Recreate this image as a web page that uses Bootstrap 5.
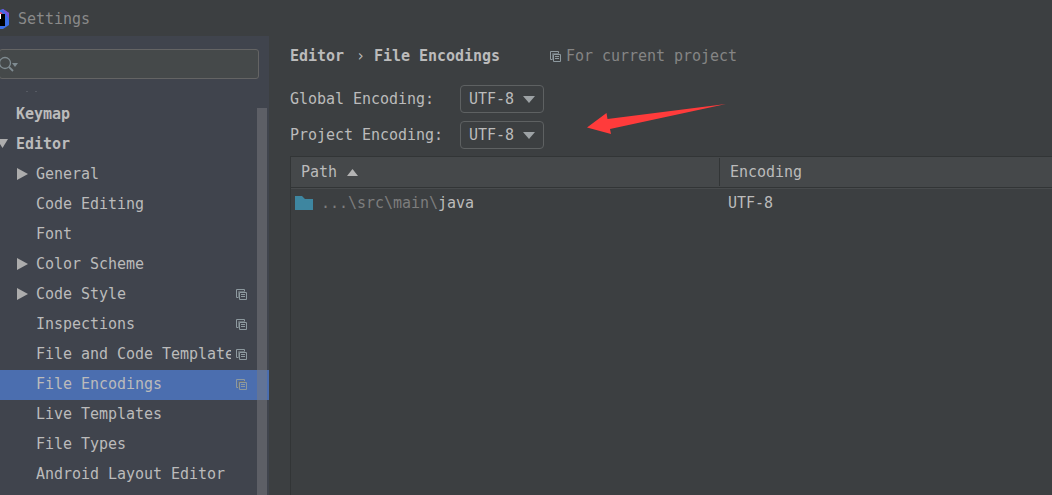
<!DOCTYPE html>
<html lang="en">
<head>
<meta charset="utf-8">
<title>Settings</title>
<link href="https://cdn.jsdelivr.net/npm/bootstrap@5.3.0/dist/css/bootstrap.min.css" rel="stylesheet">
<style>
body{background:#3c3f41;color:#bbb;font:15px/28px "DejaVu Sans Mono","Liberation Mono",monospace;letter-spacing:-.03px;height:495px;white-space:nowrap}
svg{display:block;flex:none}
.title-bar{height:36px;color:#8a8a8a}
.title-bar span{padding-top:1px}
.main-area{height:459px}
.side{width:269px;background:#40444d}
.search{width:260px;height:30px;margin:1px 0 0 -1px;border:1px solid #646464;border-radius:3px;background:#45494a}
.hint{height:21px}
.tree-row{height:30px;padding:0 22px 0 36px}
.tree-row.top-level{padding-left:16px}
.tree-row.sel{background:#4b6eaf}
.tree-row .label{width:195px;overflow:hidden;height:28px}
.tree-row .caret{position:absolute;left:17px;top:8px}
.tree-row .caret.open{left:-3px;top:9px}
.tree-row .scope{position:absolute;left:236px;top:9px}
.thumb{width:10px;height:387px;right:2px;top:72px;background:rgba(121,121,128,.5);z-index:2}
.content-pane{padding-left:21px}
.crumb{height:41px;padding-top:6px}
.crumb .sep{padding:0 13px 0 12px;width:30px;display:inline-block}
.form-line{height:28px;margin-bottom:8px}
.form-line .name{width:170px}
.combo{width:84px;height:28px;line-height:26px;border:1px solid #5e6162;border-radius:4px;padding:0 8px}
.grid-box{height:339px;margin-top:-1px;border:1px solid #323536;border-right:0;border-bottom:0}
.grid-head{height:31px;background:#45484a;border-bottom:1px solid #323536;line-height:31px}
.c1{width:429px}
.c2{padding-left:10px}
.grid-head .c1{border-right:1px solid #323536;height:28px;margin-top:1px;line-height:30px;padding-left:10px}
.grid-line{height:30px;line-height:28px;border-top:1px solid #484b4d}
.grid-line .c1{height:28px}
.dim{color:#7d7d7d}
.for-project{margin-left:2px;color:#858585}
.pointer{left:318px;top:67px}
</style>
</head>
<body class="overflow-hidden">
<svg width="0" height="0" class="position-absolute"><defs>
<symbol id="copy" viewBox="0 0 11 11"><path d="M2.500 8.500H.5V.5h8v2" fill="none" stroke="#8d999f"/><path d="M2.500 9V2.500H9" fill="none" stroke="#697278"/><path d="M3.500 3.500h7v7h-7zM5 5.500h4M5 7.500h4" fill="none" stroke="#8d999f"/></symbol>
<symbol id="right" viewBox="0 0 11 12"><path d="M0 0l11 6L0 12z" fill="#adadad"/></symbol>
</defs></svg>
<header class="title-bar d-flex align-items-center"><svg width="18" height="36"><path d="M0 10l3-1 6 4v12l-6 4H0z" fill="#3b6fe8"/><path d="M2 9l1 0 6 4v6l-3-5z" fill="#7950d8"/><path d="M0 12h1l2 2-3 0z" fill="#d34a79"/><path d="M0 14h5v12H0z" fill="#000"/><path d="M0 14h1v5H0z" fill="#fff"/></svg><span>Settings</span></header>
<div class="main-area d-flex">
<aside class="side position-relative flex-shrink-0 overflow-hidden">
<div class="pt-2"><div class="pt-1"><div class="search d-flex align-items-center"><svg width="19" height="20" fill="none" stroke="#7f8b91" stroke-width="1.300"><circle cx="5" cy="9" r="5.500"/><path d="M9 13l4 4" stroke-width="1.800"/><path d="M12 9h6l-3 4z" fill="#7f8b91" stroke="none"/></svg></div></div></div>
<div class="hint"><svg width="60" height="21"><path d="M26 12.500h2M35 12.500h2" stroke="#565a63"/></svg></div>
<nav>
<div class="tree-row top-level fw-bold">Keymap</div>
<div class="tree-row top-level fw-bold position-relative"><svg class="caret open" width="11" height="9"><path d="M0 0h11L5.500 9z" fill="#adadad"/></svg>Editor</div>
<div class="tree-row position-relative"><svg class="caret" width="11" height="12"><use href="#right"/></svg>General</div>
<div class="tree-row">Code Editing</div>
<div class="tree-row">Font</div>
<div class="tree-row position-relative"><svg class="caret" width="11" height="12"><use href="#right"/></svg>Color Scheme</div>
<div class="tree-row position-relative"><svg class="caret" width="11" height="12"><use href="#right"/></svg>Code Style<svg class="scope" width="11" height="11"><use href="#copy"/></svg></div>
<div class="tree-row position-relative">Inspections<svg class="scope" width="11" height="11"><use href="#copy"/></svg></div>
<div class="tree-row position-relative"><div class="label">File and Code Template</div><svg class="scope" width="11" height="11"><use href="#copy"/></svg></div>
<div class="tree-row sel position-relative">File Encodings<svg class="scope" width="11" height="11"><use href="#copy"/></svg></div>
<div class="tree-row">Live Templates</div>
<div class="tree-row">File Types</div>
<div class="tree-row">Android Layout Editor</div>
</nav>
<div class="thumb position-absolute"></div>
</aside>
<main class="content-pane position-relative flex-grow-1">
<div class="crumb d-flex"><span class="fw-bold">Editor<span class="fw-normal sep">›</span>File Encodings</span><svg class="ms-5 mt-2" width="16" height="13" viewBox="-2 -1 16 13"><use href="#copy" width="11" height="11"/></svg><span class="for-project">For current project</span></div>
<div class="pt-2">
<div class="form-line d-flex"><span class="name">Global Encoding:</span><div class="combo d-flex align-items-center justify-content-between">UTF-8<svg width="12" height="7"><path d="M0 0h12L6 7z" fill="#9da2a5"/></svg></div></div>
<div class="form-line d-flex"><span class="name">Project Encoding:</span><div class="combo d-flex align-items-center justify-content-between">UTF-8<svg width="12" height="7"><path d="M0 0h12L6 7z" fill="#9da2a5"/></svg></div></div>
</div>
<section class="grid-box">
<div class="grid-head d-flex"><div class="c1 d-flex align-items-center">Path<svg class="ms-2" width="16" height="7"><path d="M2 7h11L7.500 0z" fill="#b4b4b4"/></svg></div><span class="c2">Encoding</span></div>
<div class="grid-line d-flex"><div class="c1 d-flex align-items-center"><svg class="ms-1 me-2" width="18" height="15"><path d="M0 0h7l3 3h8v11H0z" fill="#3e86a0"/></svg><span><span class="dim">...\src\main\</span>java</span></div><span class="ps-2">UTF-8</span></div>
</section>
<svg class="pointer position-absolute" width="140" height="32"><path d="M0 24.500L19.500 10 20.500 16 139 1 23 26 24 31z" fill="#ff3b3b"/></svg>
</main>
</div>
<script src="https://cdn.jsdelivr.net/npm/bootstrap@5.3.0/dist/js/bootstrap.bundle.min.js"></script>
</body>
</html>
